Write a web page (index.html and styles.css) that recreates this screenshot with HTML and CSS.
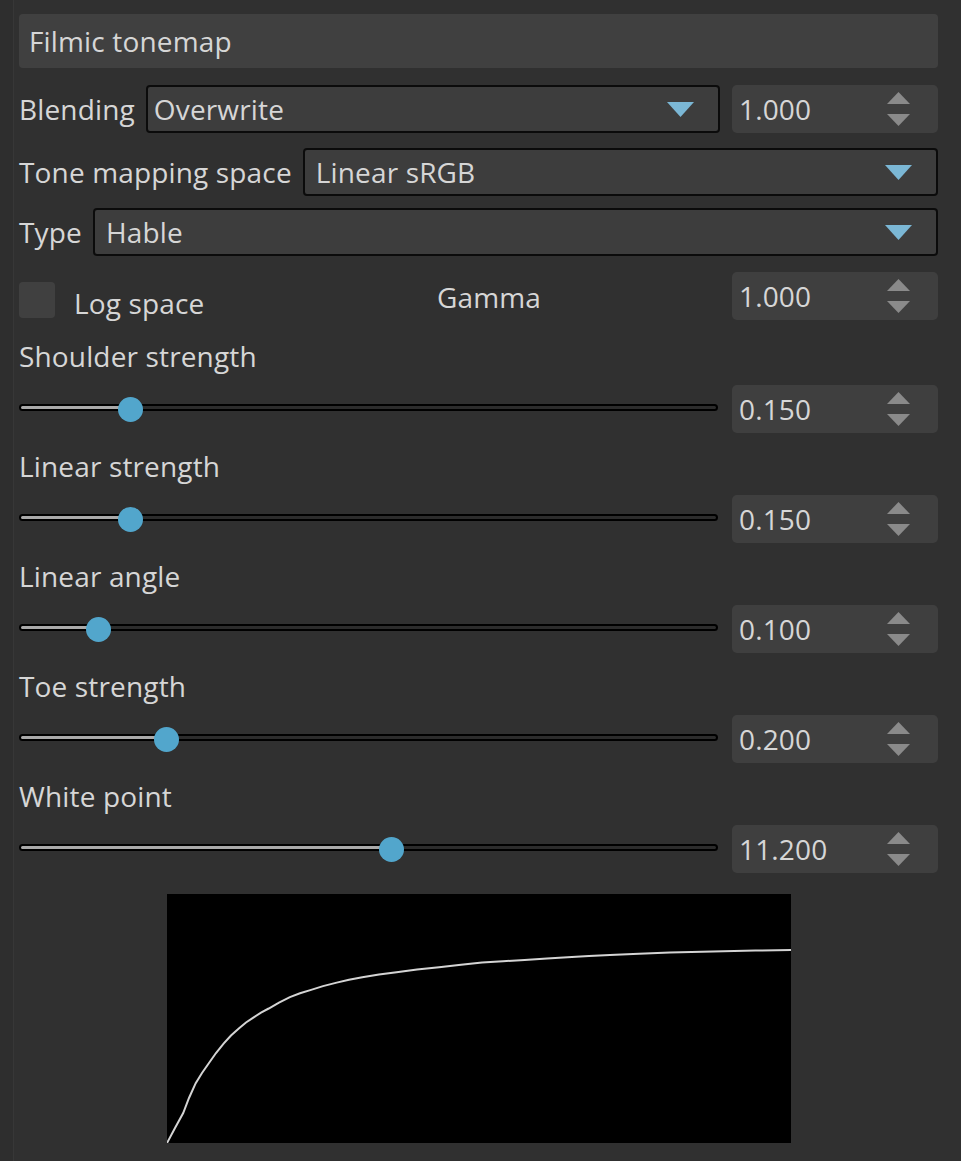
FILE: index.html
```html
<!DOCTYPE html>
<html>
<head>
<meta charset="utf-8">
<link rel="stylesheet" href="styles.css">
</head>
<body>
<div class="panel">
  <div class="title">Filmic tonemap</div>

  <div class="row r-blend">
    <span class="label">Blending</span>
    <div class="combo combo-blend"><span class="ctext">Overwrite</span><svg class="carrow" width="27" height="15" viewBox="0 0 27 15"><polygon points="0,0 27,0 13.5,15"/></svg></div>
    <div class="spin"><span class="sval">1.000</span><span class="sarrows"><svg width="23" height="12" viewBox="0 0 23 12"><polygon points="11.5,0 23,12 0,12"/></svg><svg width="23" height="12" viewBox="0 0 23 12"><polygon points="0,0 23,0 11.5,12"/></svg></span></div>
  </div>

  <div class="row r-tone">
    <span class="label">Tone mapping space</span>
    <div class="combo combo-wide"><span class="ctext">Linear sRGB</span><svg class="carrow" width="27" height="15" viewBox="0 0 27 15"><polygon points="0,0 27,0 13.5,15"/></svg></div>
  </div>

  <div class="row r-type">
    <span class="label">Type</span>
    <div class="combo combo-wide"><span class="ctext">Hable</span><svg class="carrow" width="27" height="15" viewBox="0 0 27 15"><polygon points="0,0 27,0 13.5,15"/></svg></div>
  </div>

  <div class="row r-log">
    <div class="loggroup">
      <span class="check"></span>
      <span class="label loglabel">Log space</span>
    </div>
    <span class="label gamma">Gamma</span>
    <div class="spacer"></div>
    <div class="spin"><span class="sval">1.000</span><span class="sarrows"><svg width="23" height="12" viewBox="0 0 23 12"><polygon points="11.5,0 23,12 0,12"/></svg><svg width="23" height="12" viewBox="0 0 23 12"><polygon points="0,0 23,0 11.5,12"/></svg></span></div>
  </div>

  <div class="group first">
    <div class="glabel">Shoulder strength</div>
    <div class="row">
      <div class="slider" style="--v:0.1476"><div class="track"></div><div class="handle"></div></div>
      <div class="spin"><span class="sval">0.150</span><span class="sarrows"><svg width="23" height="12" viewBox="0 0 23 12"><polygon points="11.5,0 23,12 0,12"/></svg><svg width="23" height="12" viewBox="0 0 23 12"><polygon points="0,0 23,0 11.5,12"/></svg></span></div>
    </div>
  </div>

  <div class="group">
    <div class="glabel">Linear strength</div>
    <div class="row">
      <div class="slider" style="--v:0.1476"><div class="track"></div><div class="handle"></div></div>
      <div class="spin"><span class="sval">0.150</span><span class="sarrows"><svg width="23" height="12" viewBox="0 0 23 12"><polygon points="11.5,0 23,12 0,12"/></svg><svg width="23" height="12" viewBox="0 0 23 12"><polygon points="0,0 23,0 11.5,12"/></svg></span></div>
    </div>
  </div>

  <div class="group">
    <div class="glabel">Linear angle</div>
    <div class="row">
      <div class="slider" style="--v:0.0987"><div class="track"></div><div class="handle"></div></div>
      <div class="spin"><span class="sval">0.100</span><span class="sarrows"><svg width="23" height="12" viewBox="0 0 23 12"><polygon points="11.5,0 23,12 0,12"/></svg><svg width="23" height="12" viewBox="0 0 23 12"><polygon points="0,0 23,0 11.5,12"/></svg></span></div>
    </div>
  </div>

  <div class="group">
    <div class="glabel">Toe strength</div>
    <div class="row">
      <div class="slider" style="--v:0.2"><div class="track"></div><div class="handle"></div></div>
      <div class="spin"><span class="sval">0.200</span><span class="sarrows"><svg width="23" height="12" viewBox="0 0 23 12"><polygon points="11.5,0 23,12 0,12"/></svg><svg width="23" height="12" viewBox="0 0 23 12"><polygon points="0,0 23,0 11.5,12"/></svg></span></div>
    </div>
  </div>

  <div class="group">
    <div class="glabel">White point</div>
    <div class="row">
      <div class="slider" style="--v:0.5334"><div class="track"></div><div class="handle"></div></div>
      <div class="spin"><span class="sval">11.200</span><span class="sarrows"><svg width="23" height="12" viewBox="0 0 23 12"><polygon points="11.5,0 23,12 0,12"/></svg><svg width="23" height="12" viewBox="0 0 23 12"><polygon points="0,0 23,0 11.5,12"/></svg></span></div>
    </div>
  </div>

  <div class="graphwrap">
    <svg class="graph" width="624" height="249" viewBox="0 0 624 249">
      <rect x="0" y="0" width="624" height="249" fill="#000"/>
      <polyline fill="none" stroke="#d4d4d4" stroke-width="2" points="0,249 8,234 16.2,219.1 22,204 28.7,189.2 35,179 41.8,169.3 49,159 56.8,149.4 64,141.5 71.8,134.5 79,128.5 86.7,123.3 94,118.6 101.7,114.5 112,108.6 122.9,103.1 133,99.3 144.1,95.9 156,92.1 169.7,88.6 182,85.8 195.3,83.2 212,80.6 229.6,78.2 250,75.6 272.1,73.2 294,70.8 315.1,68.5 336,67.2 357.6,66 380,64.5 400.6,63.2 422,62 443,61 472,59.7 502.9,58.5 546,57.4 588.4,56.5 624,56"/>
    </svg>
  </div>
</div>
</body>
</html>
```

FILE: styles.css
```css
html, body {
  margin: 0;
  padding: 0;
}
body {
  background: #2e2e2e;
  font-family: "Open Sans", "Noto Sans", sans-serif;
  font-size: 28px;
  letter-spacing: 0.15px;
  color: #d6d6d6;
  width: 961px;
  height: 1161px;
  overflow: hidden;
}
.panel {
  margin-left: 13px;
  border-left: 1px solid #373737;
  background: #303030;
  padding: 14px 23px 0 5px;
  height: 1161px;
  box-sizing: border-box;
}
.title {
  height: 54px;
  background: #404040;
  border-radius: 4px;
  display: flex;
  align-items: center;
  padding-left: 10px;
  box-sizing: border-box;
}
.row {
  display: flex;
  align-items: center;
  height: 48px;
}
.r-blend { margin-top: 17px; }
.r-tone { margin-top: 15px; }
.r-type { margin-top: 12px; }
.r-log { margin-top: 16px; }
.label {
  white-space: nowrap;
  line-height: 1;
}
.combo {
  height: 48px;
  box-sizing: border-box;
  border: 2px solid #0b0b0b;
  border-radius: 4px;
  background: #3d3d3d;
  display: flex;
  align-items: center;
  margin-left: 11px;
  padding-right: 24px;
  min-width: 0;
}
.combo-blend {
  flex: 1;
  padding-left: 6px;
}
.combo-wide {
  flex: 1;
  padding-left: 11px;
}
.ctext {
  flex: 1;
  white-space: nowrap;
}
.carrow {
  fill: #7bb7d5;
  display: block;
}
.spin {
  width: 206px;
  height: 48px;
  flex: none;
  box-sizing: border-box;
  background: #3f3f3f;
  border-radius: 5px;
  display: flex;
  align-items: center;
  padding-left: 7px;
  padding-right: 28px;
}
.r-blend .spin {
  margin-left: 12px;
}
.sval {
  flex: 1;
  white-space: nowrap;
}
.sarrows {
  display: flex;
  flex-direction: column;
  gap: 10px;
}
.sarrows svg {
  display: block;
  fill: #8a8a8a;
}
.loggroup {
  width: 418px;
  display: flex;
  align-items: center;
  flex: none;
}
.check {
  width: 36px;
  height: 36px;
  background: #404040;
  border-radius: 4px;
  margin-top: 8px;
  flex: none;
}
.loglabel {
  margin-left: 19px;
  margin-top: 14px;
}
.gamma {
  margin-top: 2px;
}
.spacer {
  flex: 1;
}
.group.first {
  margin-top: 16px;
}
.group {
  margin-top: 13px;
}
.glabel {
  height: 40px;
  line-height: 40px;
  white-space: nowrap;
  margin-bottom: 9px;
}
.slider {
  flex: 1;
  height: 48px;
  position: relative;
  display: flex;
  align-items: center;
  margin-right: 14px;
}
.track {
  width: 100%;
  height: 3px;
  border: 2px solid #000;
  border-radius: 4px;
  background: linear-gradient(to right, #a9a9a9 calc(var(--v) * (100% - 25px) + 12px), #2c2c2c 0);
  margin-top: -3px;
}
.handle {
  position: absolute;
  top: 50%;
  left: calc(var(--v) * (100% - 25px));
  width: 25px;
  height: 25px;
  margin-top: -12px;
  border-radius: 50%;
  background: #52a6cc;
}
.graphwrap {
  margin-top: 21px;
  display: flex;
  justify-content: center;
}
.graph {
  display: block;
}
```
